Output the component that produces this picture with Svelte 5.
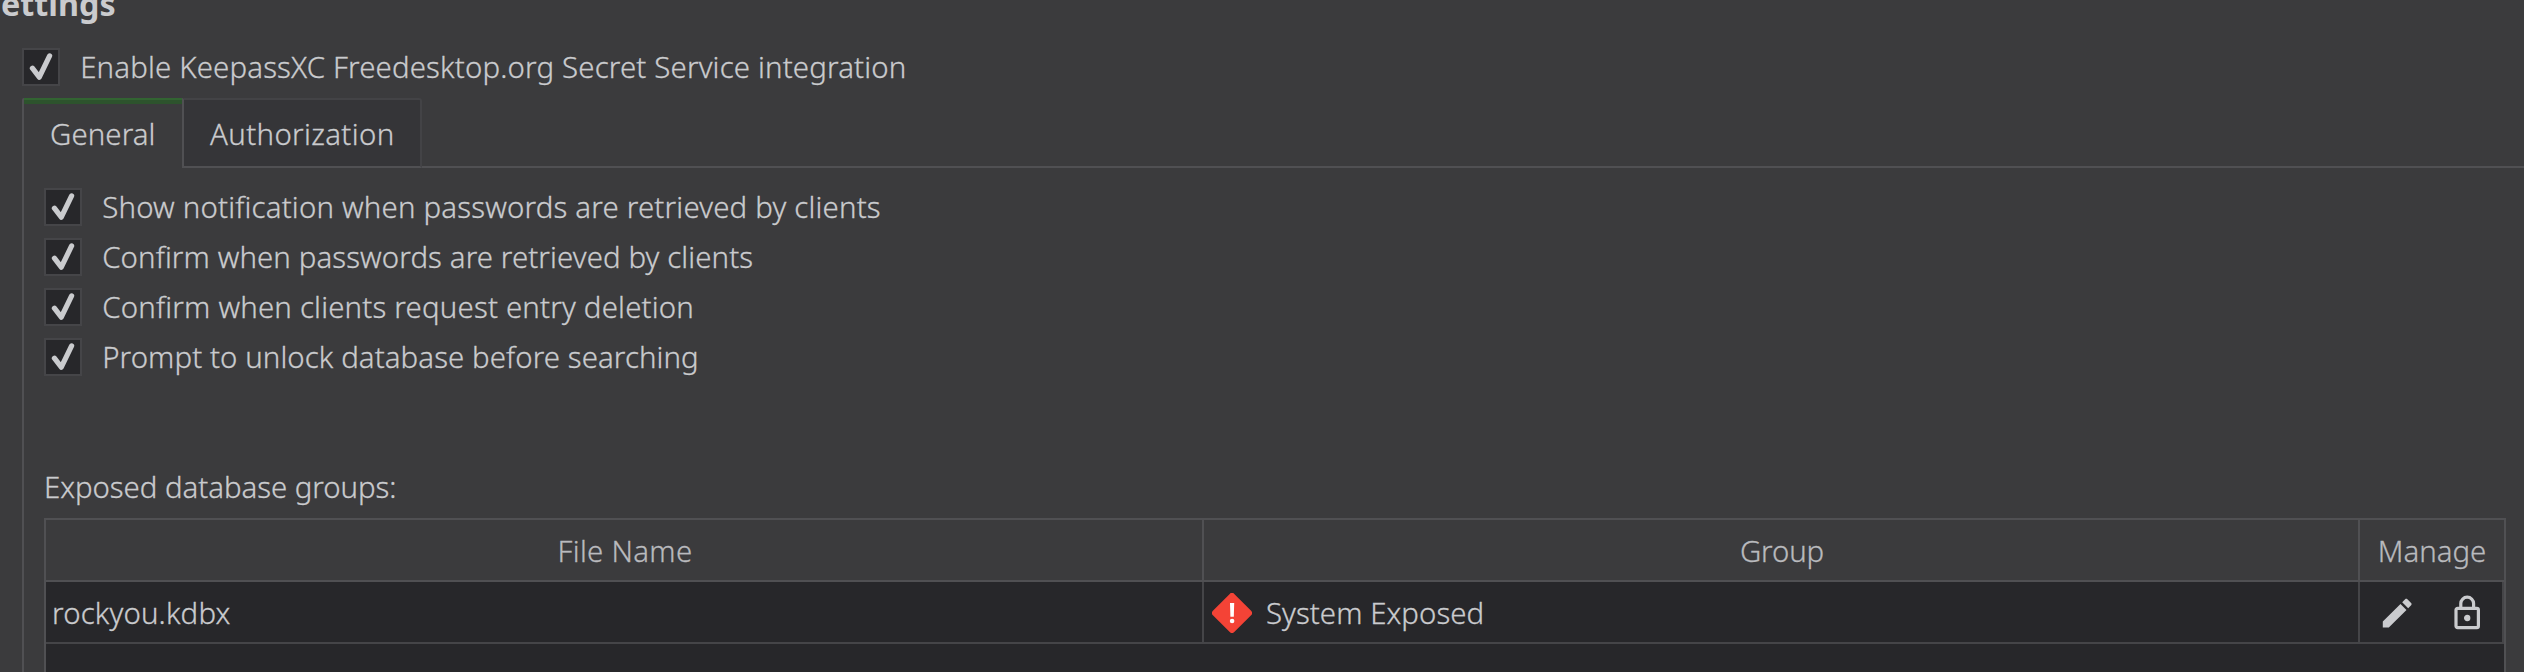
<script>
  const options = [
    { text: 'Show notification when passwords are retrieved by clients', spacing: 0.195 },
    { text: 'Confirm when passwords are retrieved by clients', spacing: 0.11 },
    { text: 'Confirm when clients request entry deletion', spacing: 0.2 },
    { text: 'Prompt to unlock database before searching', spacing: 0.087 }
  ];
</script>

{#snippet check(text, spacing)}
  <label class="check">
    <span class="box">
      <svg viewBox="0 0 38 38" width="38" height="38">
        <path d="M10.4 20.2 L17.3 29.2 L27.6 7.9" />
      </svg>
    </span>
    <span style="letter-spacing: {spacing}px">{text}</span>
  </label>
{/snippet}

<main class="window">
  <h1>ettings</h1>
  <div class="enable">
    {@render check('Enable KeepassXC Freedesktop.org Secret Service integration', 0.165)}
  </div>

  <div class="tabs">
    <div class="tab active"><span>General</span></div>
    <div class="tab second"><span>Authorization</span></div>
    <div class="rest"></div>
  </div>

  <section class="pane">
    <div class="options">
      {#each options as o}
        {@render check(o.text, o.spacing)}
      {/each}
    </div>

    <div class="caption">Exposed database groups:</div>

    <div class="table">
      <div class="row head">
        <div class="cell file">File Name</div>
        <div class="cell grouphead">Group</div>
        <div class="cell">Manage</div>
      </div>
      <div class="row body">
        <div class="cell name">rockyou.kdbx</div>
        <div class="cell group">
          <svg viewBox="0 0 40 40" width="40" height="40">
            <rect x="4.9" y="4.9" width="30.2" height="30.2" rx="3.2" transform="rotate(45 20 20)" fill="#f44336" />
            <path d="M18 10h4.2l-.4 13.8h-3.4z" fill="#fff" />
            <circle cx="20.1" cy="28" r="2.3" fill="#fff" />
          </svg>
          <span>System Exposed</span>
        </div>
        <div class="cell manage">
          <svg viewBox="0 0 24 24" width="38.4" height="38.4">
            <path d="M20.71 7.04C21.1 6.65 21.1 6 20.71 5.63L18.37 3.29C18 2.9 17.35 2.9 16.96 3.29L15.12 5.12L18.87 8.87M3 17.25V21H6.75L17.81 9.93L14.06 6.18L3 17.25Z" />
          </svg>
          <svg viewBox="0 0 24 24" width="38.4" height="38.4">
            <path d="M12 17C10.89 17 10 16.1 10 15C10 13.89 10.89 13 12 13A2 2 0 0 1 14 15A2 2 0 0 1 12 17M18 20V10H6V20H18M18 8A2 2 0 0 1 20 10V20A2 2 0 0 1 18 22H6C4.89 22 4 21.1 4 20V10C4 8.89 4.89 8 6 8H7V6A5 5 0 0 1 12 1A5 5 0 0 1 17 6V8H18M12 3A3 3 0 0 0 9 6V8H15V6A3 3 0 0 0 12 3Z" />
          </svg>
        </div>
      </div>
    </div>
  </section>
</main>

<style>
  :global(body) {
    overflow: hidden;
    background: #3b3b3d;
  }

  .window {
    display: flex;
    flex-direction: column;
    box-sizing: border-box;
    width: 2524px;
    height: 672px;
    overflow: hidden;
    background: #3b3b3d;
    color: #cacbce;
    font: 300 29.4px/38px 'Noto Sans', 'Open Sans', sans-serif;
    white-space: nowrap;
    -webkit-text-stroke: 0.3px currentColor;
  }

  h1 {
    flex: none;
    height: 48px;
    margin: 0 0 0 1px;
    font-size: 32.3px;
    font-weight: 700;
    line-height: 6px;
    -webkit-text-stroke: 0;
  }

  .enable {
    flex: none;
    height: 50px;
    padding-left: 22px;
  }

  .check {
    display: flex;
    gap: 20.2px;
    height: 38px;
  }

  .box {
    box-sizing: border-box;
    width: 38px;
    height: 38px;
    border: 2px solid #454548;
    background: #27272a;
  }

  .box svg {
    display: block;
    margin: -2px;
    fill: none;
    stroke: #cacbce;
    stroke-width: 5.2;
    stroke-linecap: round;
    stroke-linejoin: round;
  }

  .tabs {
    display: flex;
    flex: none;
    height: 70px;
    padding-left: 22px;
  }

  .tab {
    box-sizing: border-box;
    height: 70px;
    line-height: 68px;
  }

  .active {
    width: 162px;
    padding: 2px 0 0 26px;
    border: solid #505053;
    border-width: 0 2px;
    border-radius: 2px 2px 0 0;
    background: linear-gradient(#326432 2px, #2d532d 2px, #2d532d 6px, transparent 6px);
    letter-spacing: 0.1px;
  }

  .second {
    width: 238px;
    padding-left: 26px;
    border-top: 2px solid #434346;
    border-right: 2px solid #434346;
    border-bottom: 2px solid #505053;
    border-radius: 0 3px 0 0;
    background: #353538;
    letter-spacing: 0.37px;
  }

  .rest {
    flex: 1;
    border-bottom: 2px solid #505053;
  }

  .pane {
    flex: 1;
    margin-left: 22px;
    padding: 20px 18px 0 20px;
    border-left: 2px solid #505053;
  }

  .options {
    display: grid;
    gap: 12px;
  }

  .caption {
    margin-top: 92px;
    padding: 0 0 12px;
    letter-spacing: -0.04px;
  }

  .table {
    box-sizing: border-box;
    width: 2462px;
    height: 170px;
    border: 2px solid #505053;
    background: #27272a;
  }

  .row {
    display: grid;
    grid-template-columns: 1158px 1156px 144px;
    box-sizing: border-box;
    height: 62px;
    border-bottom: 2px solid #505053;
    line-height: 62px;
  }

  .head {
    background: #3b3b3d;
    color: #b9babe;
    text-align: center;
  }

  .body {
    border-color: #454548;
  }

  .cell {
    box-sizing: border-box;
    border-right: 2px solid #505053;
  }

  .head .cell:last-child {
    border-right: 0;
  }

  .file {
    padding-left: 2px;
    letter-spacing: 0.3px;
  }

  .grouphead {
    padding-left: 2px;
    letter-spacing: -0.1px;
  }

  .body .cell {
    border-color: #454548;
  }

  .name {
    padding-left: 6px;
    letter-spacing: 0.16px;
  }

  .group {
    display: flex;
    align-items: center;
    gap: 14px;
    padding-left: 8px;
    letter-spacing: 0.06px;
  }

  .manage {
    display: flex;
    align-items: center;
    gap: 31.6px;
    padding-left: 17.7px;
    fill: #cacbce;
  }
</style>
